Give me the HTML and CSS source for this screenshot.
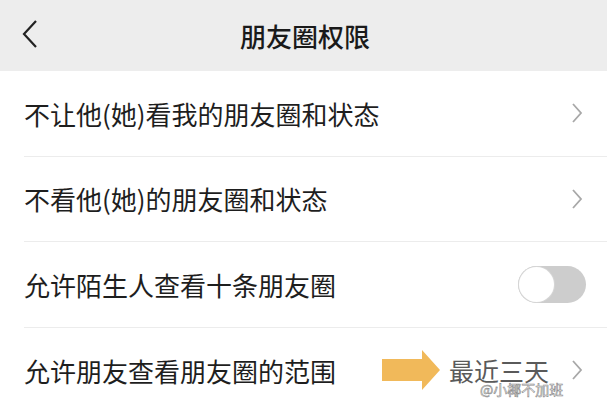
FILE: index.html
```html
<!DOCTYPE html>
<html lang="zh">
<head>
<meta charset="utf-8">
<link rel="stylesheet" href="styles.css">
</head>
<body>
<div class="page">
  <header class="bar">
    <svg class="back" width="16" height="28" viewBox="0 0 16 28"><polyline points="14,1 2,14 14,27" fill="none" stroke="#222" stroke-width="2.2"/></svg>
    <h1 class="title">朋友圈权限</h1>
  </header>
  <div class="list">
    <div class="row">
      <span class="label">不让他(她)看我的朋友圈和状态</span>
      <svg class="chev" width="12" height="20" viewBox="0 0 12 20"><polyline points="2,1 10,10 2,19" fill="none" stroke="#a8a8a8" stroke-width="1.8"/></svg>
    </div>
    <div class="row">
      <span class="label">不看他(她)的朋友圈和状态</span>
      <svg class="chev" width="12" height="20" viewBox="0 0 12 20"><polyline points="2,1 10,10 2,19" fill="none" stroke="#a8a8a8" stroke-width="1.8"/></svg>
    </div>
    <div class="row">
      <span class="label">允许陌生人查看十条朋友圈</span>
      <span class="toggle"><span class="knob"></span></span>
    </div>
    <div class="row last">
      <span class="label">允许朋友查看朋友圈的范围</span>
      <span class="value-wrap">
        <svg class="arrow" width="60" height="42" viewBox="0 0 60 42"><polygon points="0,10 40,10 40,1 58,21 40,41 40,32 0,32" fill="#f1b95a"/></svg>
        <span class="value">最近三天</span>
        <svg class="chev" width="12" height="20" viewBox="0 0 12 20"><polyline points="2,1 10,10 2,19" fill="none" stroke="#a8a8a8" stroke-width="1.8"/></svg>
        <span class="watermark">@小椰不加班</span>
      </span>
    </div>
  </div>
</div>
</body>
</html>
```

FILE: styles.css
```css
* { box-sizing: border-box; }
html, body { margin: 0; padding: 0; background: #fff; }
body { font-family: "Noto Sans CJK SC", "Noto Sans", sans-serif; color: #1a1a1a; }
.page { width: 607px; height: 404px; overflow: hidden; }
.bar {
  height: 71px;
  background: #ededed;
  position: relative;
  display: flex;
  align-items: center;
  justify-content: center;
}
.back { position: absolute; left: 22px; top: 20px; }
.title { margin: 0 0 0 3px; font-size: 26px; font-weight: 500; color: #1a1a1a; }
.list { padding-left: 24px; }
.row {
  height: 85.5px;
  display: flex;
  align-items: center;
  justify-content: space-between;
  padding-right: 22px;
  border-bottom: 1px solid #ececec;
}
.row.last { border-bottom: none; }
.label { font-size: 26px; color: #1e1e1e; }
.chev { display: block; margin-right: 2px; }
.toggle {
  width: 68px; height: 37px;
  border-radius: 19px;
  background: #cdcdcd;
  position: relative;
  margin-right: -1px;
}
.knob {
  position: absolute; left: 1px; top: 1px;
  width: 35px; height: 35px;
  border-radius: 50%;
  background: #fff;
  box-shadow: 0 0 0 1px #d6d6d6;
}
.value-wrap { display: flex; align-items: center; position: relative; }
.arrow { margin-right: 7px; }
.value { font-size: 25px; color: #5a5a5a; margin-right: 22px; }
.watermark {
  position: absolute; left: 98px; top: 30px;
  font-size: 14px; color: #fff;
  -webkit-text-stroke: 0.6px #8a8a8a;
  white-space: nowrap;
}
```
